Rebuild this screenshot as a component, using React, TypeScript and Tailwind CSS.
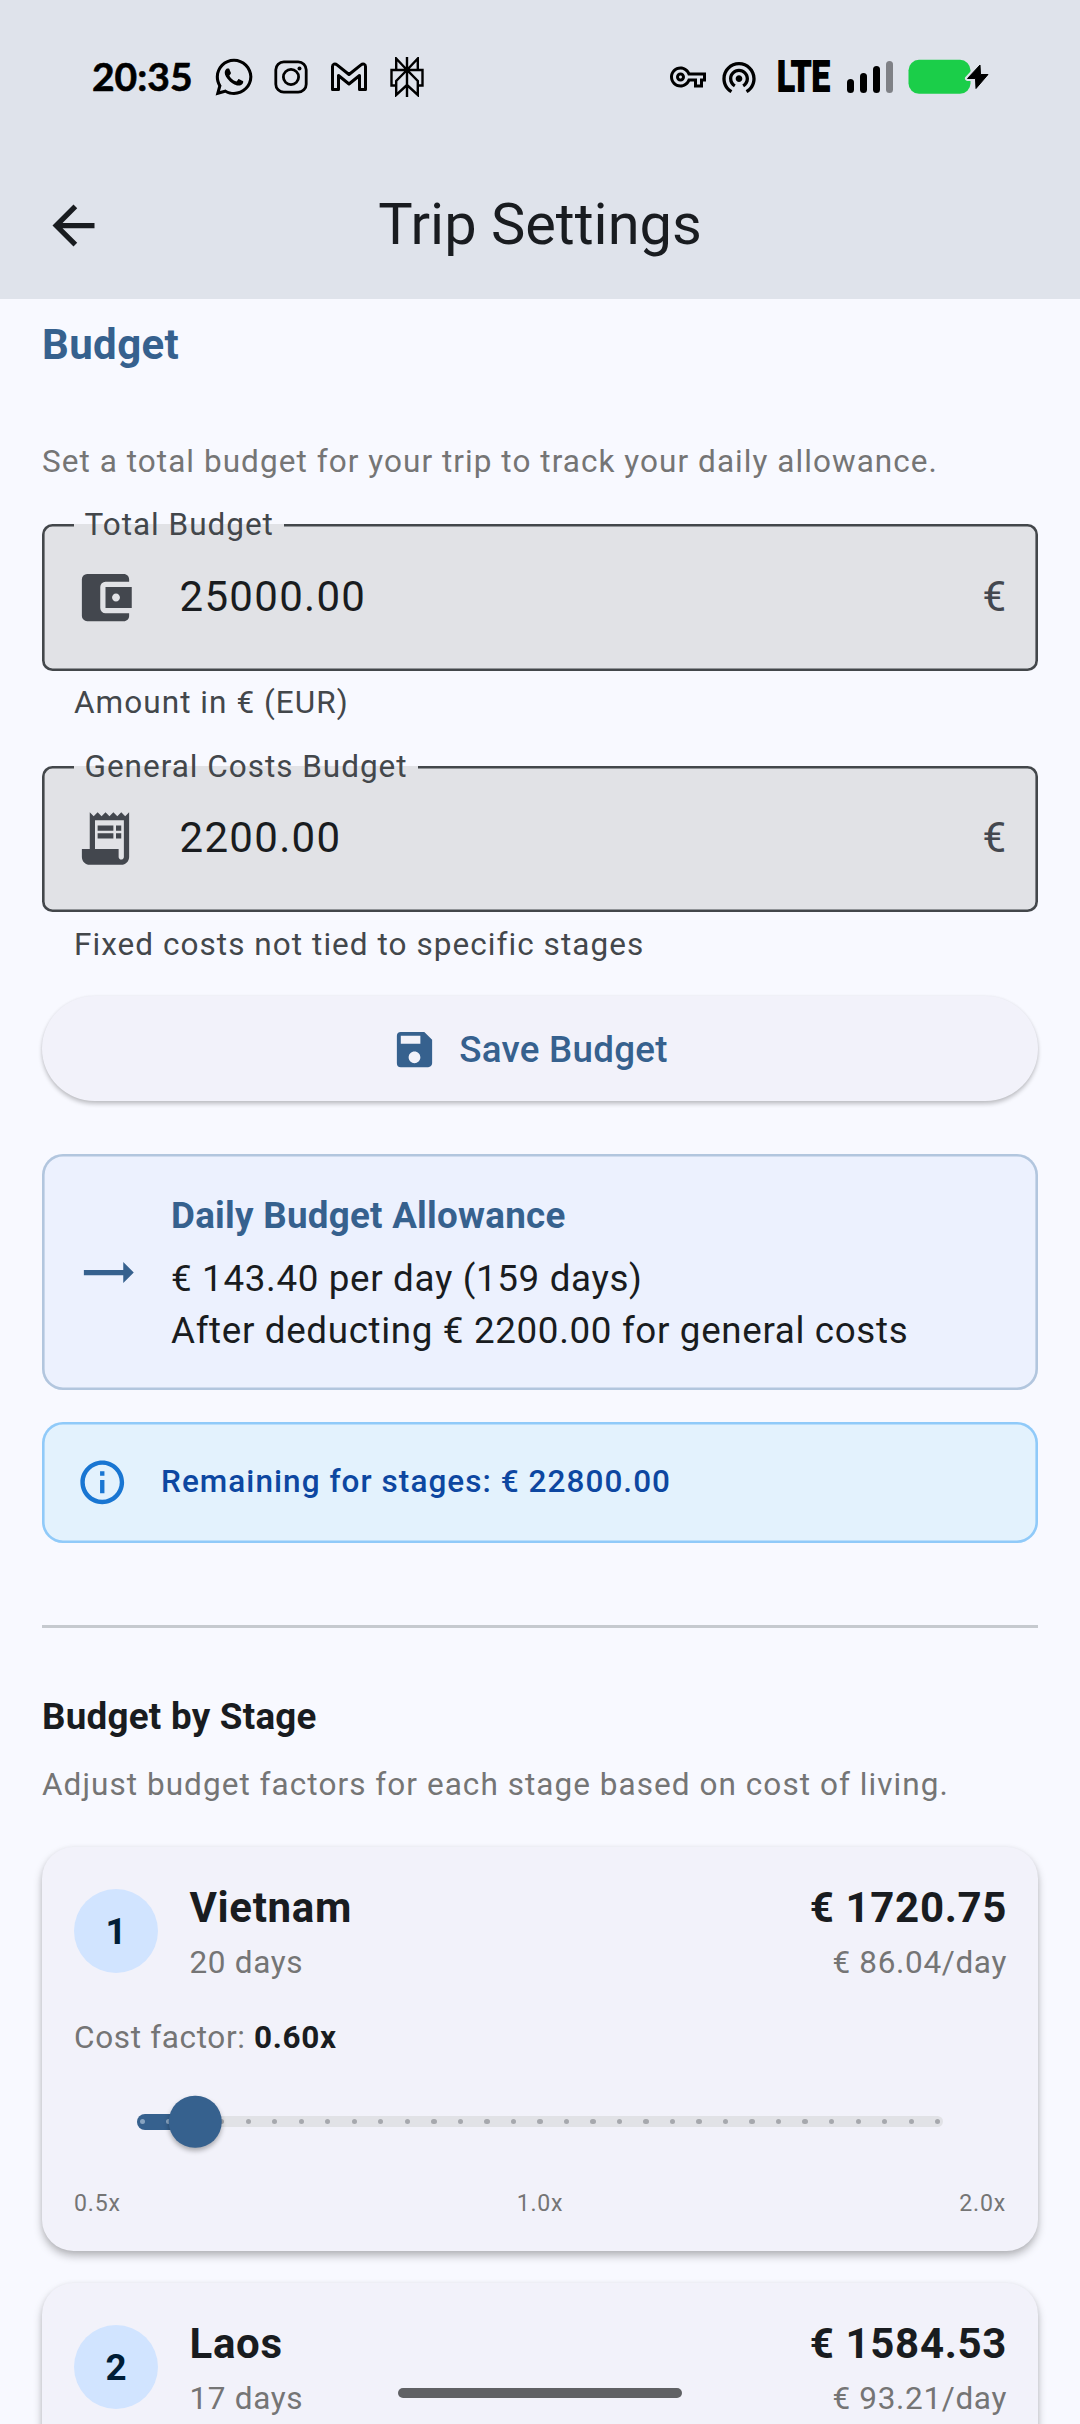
import { FaWhatsapp } from "react-icons/fa";
import { MdArrowBack, MdAccountBalanceWallet, MdReceiptLong, MdSave, MdTrendingFlat, MdInfoOutline, MdOutlineVpnKey, MdWifiTethering } from "react-icons/md";
import type { ReactNode } from "react";

interface FieldProps {
    label: string,
    value: string,
    helper: string,
    icon: ReactNode
}

interface StageProps {
    index: number,
    name: string,
    days: number,
    total: string,
    perDay: string,
    factor: number
}

const stages: StageProps[] = [
    { index: 1, name: 'Vietnam', days: 20, total: '1720.75', perDay: '86.04', factor: 0.6 },
    { index: 2, name: 'Laos', days: 17, total: '1584.53', perDay: '93.21', factor: 0.65 },
]

const MIN_FACTOR = 0.5
const MAX_FACTOR = 2
const STEP_COUNT = 30

const InstagramIcon = () => (
    <svg width="34" height="34" viewBox="0 0 34 34" fill="none" stroke="black" strokeWidth="2.8">
        <rect x="1.8" y="1.8" width="30.4" height="30.4" rx="8" />
        <circle cx="17" cy="17" r="7.6" />
        <circle cx="25.5" cy="8.5" r="2" fill="black" stroke="none" />
    </svg>
)

const GmailIcon = () => (
    <svg width="38" height="30" viewBox="0 0 38 30" fill="none" stroke="black" strokeWidth="3" strokeLinejoin="round">
        <path d="M2.500 27.500V4.500C2.500 2 5 1.200 7 2.800L19 12.500L31 2.800C33 1.200 35.500 2 35.500 4.500V27.500H29.500V13.500L19 22L8.500 13.500V27.500Z" />
    </svg>
)

const PerplexityIcon = () => (
    <svg width="34" height="40" viewBox="0 0 34 40" fill="none" stroke="black" strokeWidth="2.4">
        <path d="M17 0V40M6.200 1.500L17 13L27.800 1.500V13H6.200ZM6.200 28.500H1.500V13H32.500V28.500H27.800M17 13L6.200 24V38L17 28L27.800 38V24Z" />
        <circle cx="17" cy="13" r="3" fill="black" stroke="none" />
    </svg>
)

const BatteryIcon = () => (
    <svg width="82" height="36" viewBox="0 0 82 36">
        <rect x="0.500" y="0.800" width="62" height="34" rx="10.500" fill="#1bce49" />
        <path d="M72 6L59.500 19.500H67L68 29.500L80 15.500H72.500Z" fill="#dfe3eb" stroke="#dfe3eb" strokeWidth="5" strokeLinejoin="round" />
        <path d="M72 6L59.500 19.500H67.500L68 29.500L80 15.500H72.500Z" fill="black" stroke="black" strokeWidth="1" strokeLinejoin="round" />
    </svg>
)

const StatusBar = () => {
    return (
        <div className="flex h-[154px] items-center pl-[92px] pr-[90px] text-black">
            <span className="-mt-[2px] w-[102px] font-['Lato'] text-[39px] font-bold leading-none [-webkit-text-stroke:0.6px_black]">20:35</span>
            <div className="ml-[19px] flex items-center">
                <FaWhatsapp className="h-[42px] w-[42px]" />
                <div className="ml-[19px]"><InstagramIcon /></div>
                <div className="ml-[22px]"><GmailIcon /></div>
                <div className="ml-[22px]"><PerplexityIcon /></div>
            </div>

            <div className="ml-auto flex items-center">
                <MdOutlineVpnKey className="h-9 w-9" />
                <MdWifiTethering className="ml-[13px] h-10 w-10" />
                <div className="ml-[18px] w-[57px]">
                    <span className="inline-block origin-left scale-x-[0.78] text-[42px] font-bold leading-none [-webkit-text-stroke:1.8px_black]">LTE</span>
                </div>
                <div className="ml-[13px] flex items-end gap-[5.500px]">
                    <div className="h-[14px] w-[7.500px] rounded-full bg-black" />
                    <div className="h-[20px] w-[7.500px] rounded-full bg-black" />
                    <div className="h-[27px] w-[7.500px] rounded-full bg-black" />
                    <div className="h-[32px] w-[7.500px] rounded-full bg-[#7f8186]" />
                </div>
                <div className="ml-[15px]">
                    <BatteryIcon />
                </div>
            </div>
        </div>
    )
}

const BudgetField = ({ label, value, helper, icon }: FieldProps) => {
    return (
        <div>
            <div className="relative flex h-[146.600px] items-center rounded-[10.500px] bg-[#e1e2e6] pl-[31.500px] pr-[32px] shadow-[inset_0_0_0_2.6px_#43474b]">
                <div className="absolute left-[32px] top-0 flex h-[3px] items-center bg-[#e1e2e6] px-[10.500px]">
                    <span className="-mt-px text-[31.500px] leading-none tracking-[0.98px] text-[#43474b]">{label}</span>
                </div>
                <div className="text-[63px] text-[#43474e]">{icon}</div>
                <span className="-mt-[2px] ml-[43px] flex-1 text-[42px] leading-[63px] tracking-[1.31px] text-[#191c20]">{value}</span>
                <span className="-mt-[2px] text-[42px] leading-[63px] text-[#43474e]">€</span>
            </div>
            <p className="mt-[11.500px] pl-[32px] text-[31.500px] leading-[42px] tracking-[1.05px] text-[#43474b]">{helper}</p>
        </div>
    )
}

const FactorSlider = ({ factor }: { factor: number }) => {
    const ratio = (factor - MIN_FACTOR) / (MAX_FACTOR - MIN_FACTOR)

    return (
        <div className="relative mx-[63px] flex h-[125px] items-center">
            <div className="h-[10.500px] w-full rounded-full bg-[#e1e2e6]" />
            <div className="absolute left-0 h-[15.750px] rounded-full bg-[#36618e]" style={{ width: `${ratio * 100 + 3}%` }} />
            <div className="absolute inset-x-[2.600px] flex justify-between">
                {Array.from({ length: STEP_COUNT + 1 }, (_, i) => (
                    <div key={i} className={`h-[5.250px] w-[5.250px] rounded-full ${i / STEP_COUNT <= ratio ? 'bg-[#88a4c1]' : 'bg-[#a6a8ad]'}`} />
                ))}
            </div>
            <div className="absolute inset-x-[5px]">
                <div
                    className="absolute h-[52.500px] w-[52.500px] -translate-x-1/2 -translate-y-1/2 rounded-full bg-[#36618e] shadow-[0_3px_5px_rgba(0,0,0,0.3)]"
                    style={{ left: `${ratio * 100}%` }}
                />
            </div>
        </div>
    )
}

const StageCard = ({ index, name, days, total, perDay, factor }: StageProps) => {
    return (
        <div className="h-[404.300px] shrink-0 rounded-[31.500px] bg-[#f2f2fa] px-[32px] pt-[31px] shadow-[0_5px_8px_rgba(0,0,0,0.26),0_1px_5px_rgba(0,0,0,0.06)]">
            <div className="flex items-center">
                <div className="flex h-[84px] w-[84px] items-center justify-center rounded-full bg-[#d1e4ff] text-[36.750px] font-bold text-[#001d36]">{index}</div>
                <div className="ml-[31.500px] flex-1">
                    <h3 className="text-[42px] font-bold leading-[60px] tracking-[0.66px] text-[#191c20]">{name}</h3>
                    <p className="mt-[4px] text-[31.500px] leading-[42px] tracking-[0.66px] text-[#757575]">{days} days</p>
                </div>
                <div className="-mr-px text-right">
                    <p className="text-[42px] font-bold leading-[60px] tracking-[0.66px] text-[#191c20]">€ {total}</p>
                    <p className="mt-[4px] text-[31.500px] leading-[42px] tracking-[0.66px] text-[#757575]">€ {perDay}/day</p>
                </div>
            </div>
            <p className="mt-[33px] text-[31.500px] leading-[42px] tracking-[0.66px] text-[#757575]">
                Cost factor: <span className="font-bold text-[#191c20]">{factor.toFixed(2)}x</span>
            </p>
            <FactorSlider factor={factor} />
            <div className="mt-[4px] flex justify-between text-[23.100px] leading-[32px] tracking-[0.8px] text-[#757575]">
                <span>0.5x</span>
                <span>1.0x</span>
                <span>2.0x</span>
            </div>
        </div>
    )
}

export default function App() {
    return (
        <div className="relative flex h-[2424px] w-[1080px] flex-col overflow-hidden bg-[#f8f9ff] font-['Roboto',sans-serif]">
            <header className="h-[299px] shrink-0 bg-[#dfe3eb]">
                <StatusBar />
                <div className="flex h-[143px] items-center px-[42px]">
                    <MdArrowBack className="h-[63px] w-[63px] text-[#191c20]" />
                    <h1 className="-mt-[3px] flex-1 pr-[63px] text-center text-[57.750px] leading-[74px] text-[#191c20]">Trip Settings</h1>
                </div>
            </header>

            <main className="flex flex-col px-[42px]">
                <h2 className="mt-[14px] text-[42px] font-bold leading-[63px] tracking-[0.39px] text-[#36618e]">Budget</h2>
                <p className="mt-[65px] text-[31.500px] leading-[42px] tracking-[1.05px] text-[#757575]">Set a total budget for your trip to track your daily allowance.</p>

                <div className="mt-[41px] flex flex-col gap-[41.500px]">
                    <BudgetField label="Total Budget" value="25000.00" helper="Amount in € (EUR)" icon={<MdAccountBalanceWallet />} />
                    <BudgetField label="General Costs Budget" value="2200.00" helper="Fixed costs not tied to specific stages" icon={<MdReceiptLong />} />
                </div>

                <button className="mt-[30.500px] flex h-[105px] items-center justify-center gap-[21px] rounded-full bg-[#f2f2fa] pr-[21px] pt-px text-[36.750px] font-medium tracking-[0.26px] text-[#36618e] shadow-[0_3px_4px_rgba(0,0,0,0.22),0_0_3px_rgba(0,0,0,0.06)]">
                    <MdSave className="h-[47px] w-[47px]" />
                    Save Budget
                </button>

                <div className="mt-[53px] flex h-[236px] items-center rounded-[21px] bg-[#ecf1fe] px-[34px] shadow-[inset_0_0_0_2.6px_#b2c6de]">
                    <MdTrendingFlat className="h-[63px] w-[63px] text-[#36618e]" />
                    <div className="ml-[32px] pt-[2px]">
                        <h3 className="text-[36.750px] font-bold leading-[52.500px] tracking-[0.26px] text-[#36618e]">Daily Budget Allowance</h3>
                        <p className="mt-[10.500px] text-[36.750px] leading-[52px] tracking-[0.66px] text-[#191c20]">€ 143.40 per day (159 days)</p>
                        <p className="text-[36.750px] leading-[52px] tracking-[0.66px] text-[#191c20]">After deducting € 2200.00 for general costs</p>
                    </div>
                </div>

                <div className="mt-[32px] flex h-[120.500px] items-center rounded-[21px] bg-[#e3f2fd] px-[34px] shadow-[inset_0_0_0_2.6px_#90caf9]">
                    <MdInfoOutline className="h-[52.500px] w-[52.500px] text-[#1976d2]" />
                    <p className="ml-[32.500px] text-[31.500px] font-medium leading-[42px] tracking-[1.05px] text-[#0d47a1]">Remaining for stages: € 22800.00</p>
                </div>

                <hr className="mt-[82.500px] h-[3px] border-0 bg-[#c6cacf]" />

                <h3 className="mt-[62.500px] text-[36.750px] font-bold leading-[52.500px] tracking-[0.26px] text-[#191c20]">Budget by Stage</h3>
                <p className="mt-[21px] text-[31.500px] leading-[42px] tracking-[1.05px] text-[#757575]">Adjust budget factors for each stage based on cost of living.</p>

                <div className="mt-[41px] flex flex-col gap-[31.700px]">
                    {stages.map((stage) => (
                        <StageCard key={stage.index} {...stage} />
                    ))}
                </div>
            </main>

            <div className="absolute bottom-[26px] left-[398px] h-[10px] w-[284px] rounded-full bg-[#606164]" />
        </div>
    )
}
